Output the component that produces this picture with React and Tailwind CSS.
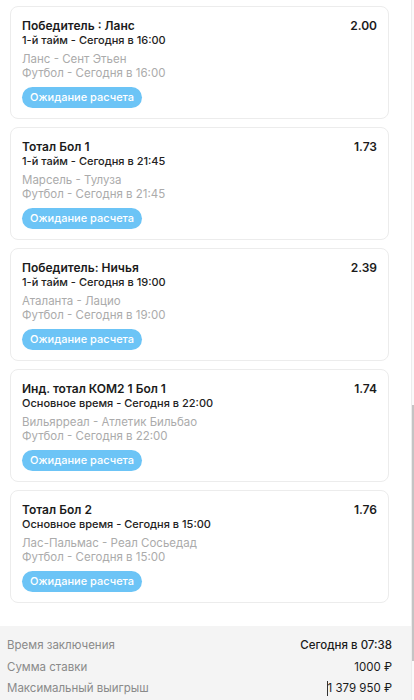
import React from "react";

const bets = [
  {
    title: "Победитель : Ланс",
    period: "1-й тайм - Сегодня в 16:00",
    match: "Ланс - Сент Этьен",
    sport: "Футбол - Сегодня в 16:00",
    odds: "2.00",
  },
  {
    title: "Тотал Бол 1",
    period: "1-й тайм - Сегодня в 21:45",
    match: "Марсель - Тулуза",
    sport: "Футбол - Сегодня в 21:45",
    odds: "1.73",
  },
  {
    title: "Победитель: Ничья",
    period: "1-й тайм - Сегодня в 19:00",
    match: "Аталанта - Лацио",
    sport: "Футбол - Сегодня в 19:00",
    odds: "2.39",
  },
  {
    title: "Инд. тотал КОМ2 1 Бол 1",
    period: "Основное время - Сегодня в 22:00",
    match: "Вильярреал - Атлетик Бильбао",
    sport: "Футбол - Сегодня в 22:00",
    odds: "1.74",
  },
  {
    title: "Тотал Бол 2",
    period: "Основное время - Сегодня в 15:00",
    match: "Лас-Пальмас - Реал Сосьедад",
    sport: "Футбол - Сегодня в 15:00",
    odds: "1.76",
  },
];

const BetCard = ({ bet }) => {
  return (
    <div className="h-[113px] rounded-[8px] border border-[#ececec] bg-white pl-[11px] pr-[11px] pt-[12px]">
      <div className="flex justify-between items-start">
        <div className="text-[12px] leading-[14px] font-semibold text-[#1b1b1b]">{bet.title}</div>
        <div className="text-[12px] leading-[14px] font-semibold text-[#1b1b1b]">{bet.odds}</div>
      </div>
      <div className="text-[11px] leading-[14px] font-medium text-[#222]">{bet.period}</div>
      <div className="mt-[5px] text-[11.5px] leading-[14px] text-[#ababab]">{bet.match}</div>
      <div className="text-[11.5px] leading-[14px] text-[#ababab]">{bet.sport}</div>
      <div className="mt-[7px] inline-flex h-[21px] items-center rounded-full bg-[#6cc4f6] px-[8px] text-[11px] font-medium text-white">
        Ожидание расчета
      </div>
    </div>
  );
};

const SummaryRow = ({ label, children, bold }) => (
  <div className="flex justify-between items-center h-[21.5px] text-[11.5px]">
    <span className="text-[#8a8a8a]">{label}</span>
    <span className={bold ? "font-medium text-[#1b1b1b]" : "text-[#1b1b1b]"}>{children}</span>
  </div>
);

export default function App() {
  return (
    <div className="flex h-[700px] w-[414px] overflow-hidden bg-white font-['Inter','Noto_Sans',sans-serif]">
      <div className="flex w-[411px] flex-col">
        <div className="flex flex-col gap-[8px] pl-[10px] pr-[22px] pt-[6px]">
          {bets.map((bet, i) => (
            <BetCard key={i} bet={bet} />
          ))}
        </div>
        <div className="mt-[23px] flex-1 bg-[#f4f4f4] pl-[7px] pr-[19px] pt-[9px]">
          <SummaryRow label="Время заключения" bold>
            Сегодня в 07:38
          </SummaryRow>
          <SummaryRow label="Сумма ставки">1000 ₽</SummaryRow>
          <SummaryRow label="Максимальный выигрыш">
            <span className="inline-block h-[15px] w-px bg-[#333] align-middle" />
            1 379 950 ₽
          </SummaryRow>
        </div>
      </div>
      {/* scrollbar */}
      <div className="flex w-[3px] flex-col border-l border-[#ececec] bg-[#fafafa]">
        <div className="h-[405px]" />
        <div className="h-[256px] bg-[#c4c4c4]" />
      </div>
    </div>
  );
}
